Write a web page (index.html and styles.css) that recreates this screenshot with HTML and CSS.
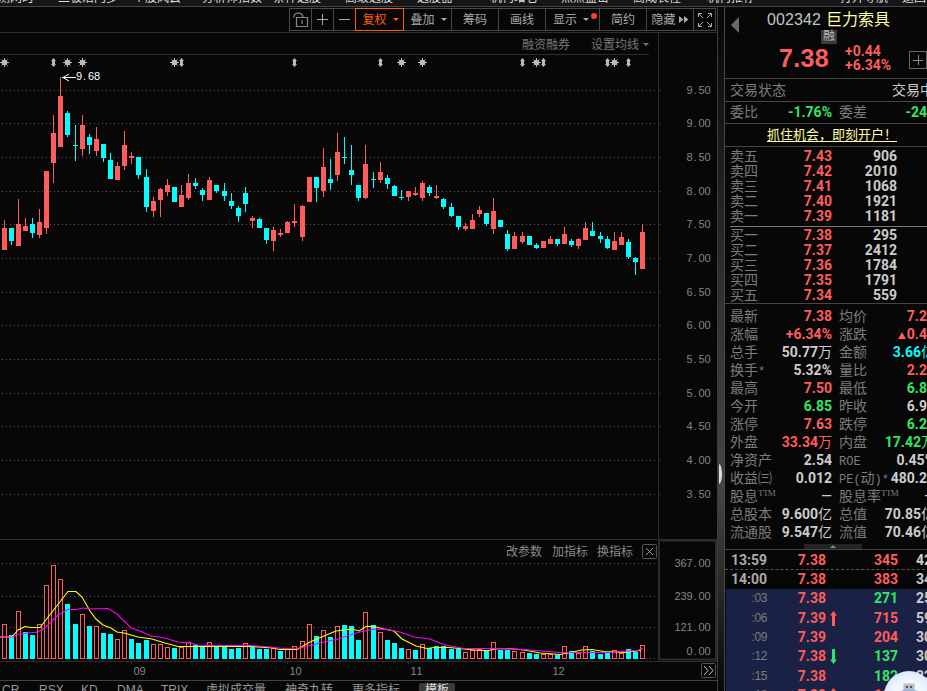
FILE: index.html
```html
<!DOCTYPE html>
<html lang="zh-CN">
<head>
<meta charset="utf-8">
<title>巨力索具 002342</title>
<link rel="stylesheet" href="styles.css">
</head>
<body>
<nav class="menu">
  <span class="m1">金测网时</span><span class="m2">二板活门多</span><span class="m3">个股风云</span><span class="m4">分析师指数</span><span class="m5">条件选股</span><span class="m6">高级选股</span><span class="m7">选股器</span><span class="m8">机构增仓</span><span class="m9">点点盈击</span><span class="m10">高成长性</span><span class="m11">机构推荐</span><span class="m12">打开导航</span><span class="m13">返回</span>
</nav>
<div class="app">
  <main class="main">
    <div class="toolbar">
      <div class="tools">
        <button class="t w22"><svg width="16" height="16" viewBox="0 0 16 16"><path d="M.7 5.500C.7 3 2.500 1 5.500 1S10 3 10 5.500" fill="none" stroke="#777" stroke-width="1.4"/><path d="M3.500 5.500H14.500V14.500H3.500ZM9 8V12" fill="none" stroke="#888" stroke-width="1.2"/></svg></button>
        <button class="t w22"><svg width="11" height="11"><path d="M0 5.5H11M5.500 0V11" stroke="#aaa"/></svg></button>
        <button class="t w22"><svg width="11" height="11"><path d="M0 5.500H11" stroke="#aaa"/></svg></button>
        <button class="t w48 on">复权<i class="dn"></i></button>
        <button class="t w48">叠加<i class="dn"></i></button>
        <button class="t w47">筹码</button>
        <button class="t w47">画线</button>
        <button class="t w54 dot">显示<i class="dn"></i></button>
        <button class="t w47">简约</button>
        <button class="t w47 hide">隐藏<svg width="10" height="7"><path d="M0 0L4.500 3.500L0 7ZM5 0L9.500 3.500L5 7Z" fill="#aaa"/></svg></button>
        <button class="t w23"><svg width="14" height="14"><path d="M.5 4V.5H4M.5.5L5 5M10 .5H13.500V4M13.500.5L9 5M.5 10V13.500H4M.5 13.500L5 9M10 13.500H13.500V10M13.500 13.500L9 9" fill="none" stroke="#aaa"/></svg></button>
      </div>
    </div>
    <div class="sub"><div class="sub-left"><span>融资融券</span><span>设置均线<i class="dn"></i></span></div></div>
    <svg id="kline" class="pane" width="717" height="485" viewBox="0 55 717 485"></svg>
    <svg id="volume" class="pane" width="717" height="140" viewBox="0 540 717 140"></svg>
    <div class="tabs">
      <span class="c1">CR</span><span class="c2">RSX</span><span class="c3">KD</span><span class="c4">DMA</span><span class="c5">TRIX</span><span class="c6">虚拟成交量</span><span class="c7">神奇九转</span><span class="c8">更多指标</span><span class="c9">模板</span>
    </div>
  </main>
  <div class="split"><i></i></div>
  <aside class="quote">
    <header class="head">
      <i class="prev"></i>
      <div class="name"><span>002342</span><b>巨力索具</b></div>
      <div class="tag">融</div>
      <div class="last"><strong>7.38</strong><div class="chg"><span>+0.44</span><span>+6.34%</span></div><em class="plus"></em></div>
    </header>
    <div class="state"><span>交易状态</span><span class="lt">交易中</span></div>
    <div class="row ratio"><span class="k">委比</span><b class="g">-1.76%</b><span class="k">委差</span><b class="g">-246</b></div>
    <div class="link"><a>抓住机会，即刻开户！</a></div>
    <div class="book asks">
      <div><span>卖五</span><b class="r">7.43</b><b>906</b></div>
      <div><span>卖四</span><b class="r">7.42</b><b>2010</b></div>
      <div><span>卖三</span><b class="r">7.41</b><b>1068</b></div>
      <div><span>卖二</span><b class="r">7.40</b><b>1921</b></div>
      <div><span>卖一</span><b class="r">7.39</b><b>1181</b></div>
    </div>
    <div class="book bids">
      <div><span>买一</span><b class="r">7.38</b><b>295</b></div>
      <div><span>买二</span><b class="r">7.37</b><b>2412</b></div>
      <div><span>买三</span><b class="r">7.36</b><b>1784</b></div>
      <div><span>买四</span><b class="r">7.35</b><b>1791</b></div>
      <div><span>买五</span><b class="r">7.34</b><b>559</b></div>
    </div>
    <div class="stats">
      <div class="row"><span class="k">最新</span><b class="r">7.38</b><span class="k">均价</span><b class="r">7.21</b></div>
      <div class="row"><span class="k">涨幅</span><b class="r">+6.34%</b><span class="k">涨跌</span><b class="r"><i class="up"></i>0.44</b></div>
      <div class="row"><span class="k">总手</span><b>50.77<u>万</u></b><span class="k">金额</span><b class="c">3.66<u>亿</u></b></div>
      <div class="row"><span class="k">换手<s>*</s></span><b>5.32%</b><span class="k">量比</span><b class="r">2.21</b></div>
      <div class="row"><span class="k">最高</span><b class="r">7.50</b><span class="k">最低</span><b class="g">6.85</b></div>
      <div class="row"><span class="k">今开</span><b class="g">6.85</b><span class="k">昨收</span><b>6.94</b></div>
      <div class="row"><span class="k">涨停</span><b class="r">7.63</b><span class="k">跌停</span><b class="g">6.25</b></div>
      <div class="row"><span class="k">外盘</span><b class="r">33.34<u>万</u></b><span class="k">内盘</span><b class="g">17.42<u>万</u></b></div>
      <div class="row"><span class="k">净资产</span><b>2.54</b><span class="k"><s>ROE</s></span><b>0.45%</b></div>
      <div class="row"><span class="k">收益㈢</span><b>0.012</b><span class="k"><s>PE(</s>动<s>)*</s></span><b>480.21</b></div>
      <div class="row"><span class="k">股息<sup>TTM</sup></span><b><u>—</u></b><span class="k">股息率<sup>TTM</sup></span><b><u>—</u></b></div>
      <div class="row"><span class="k">总股本</span><b>9.600<u>亿</u></b><span class="k">总值</span><b>70.85<u>亿</u></b></div>
      <div class="row"><span class="k">流通股</span><b>9.547<u>亿</u></b><span class="k">流值</span><b>70.46<u>亿</u></b></div>
      <div class="fold"><i></i></div>
    </div>
    <div class="ticks">
      <div class="dash"><b class="tm">13:59</b><b class="r">7.38</b><i></i><b class="r">345</b><b class="n">42</b></div>
      <div><b class="tm">14:00</b><b class="r">7.38</b><i></i><b class="r">383</b><b class="n">34</b></div>
      <div class="sel"><span>:03</span><b class="r">7.38</b><i></i><b class="g">271</b><b class="n">25</b></div>
      <div class="sel"><span>:06</span><b class="r">7.39</b><svg class="r" width="7" height="15"><path d="M3.500 0L7 4.500H5V15H2V4.500H0Z"/></svg><b class="r">715</b><b class="n">59</b></div>
      <div class="sel"><span>:09</span><b class="r">7.39</b><i></i><b class="r">204</b><b class="n">30</b></div>
      <div class="sel"><span>:12</span><b class="r">7.38</b><svg class="g" width="7" height="15"><path d="M3.500 15L7 10.500H5V0H2V10.500H0Z"/></svg><b class="g">137</b><b class="n">30</b></div>
      <div class="sel"><span>:15</span><b class="r">7.38</b><i></i><b class="g">182</b><b class="n">22</b></div>
      <div class="sel"><span>:18</span><b class="r">7.39</b><svg class="r" width="7" height="15"><path d="M3.500 0L7 4.500H5V15H2V4.500H0Z"/></svg><b class="r">116</b><b class="n">22</b></div>
    </div>
  </aside>
</div>
<div class="robot"><svg width="50" height="50" viewBox="0 0 50 50"><rect x="19.500" y="12.500" width="11" height="7" fill="#b9bcc2"/><path d="M22 15h2v2h-2zM26 15h2v2h-2z" fill="#555"/><rect x="17" y="19.500" width="17" height="12" rx="2" fill="#5b86ee"/></svg></div>
<script src="chart.js"></script>
</body>
</html>
```
FILE: styles.css
```css
* { box-sizing: border-box; }
html, body { height: 100%; }
body {
  margin: 0; width: 927px; height: 691px; overflow: hidden; position: relative;
  background: #070707; color: #ccc;
  font: 12px/14px "Liberation Sans", "Noto Sans CJK SC", sans-serif;
}
i, em { font-style: normal; }
u, s { text-decoration: none; }

/* menu strip, only the feet of its labels are in view */
.menu { height: 7px; background: #161616; border-bottom: 1px solid #454545; overflow: hidden; display: flex; align-items: flex-end; color: #ddd; white-space: nowrap; }
.menu span { flex: none; height: 14px; line-height: 14px; margin-bottom: 1px; }
.m1 { width: 58px; text-indent: -14px; } .m2 { width: 75px; } .m3 { width: 69px; } .m4 { width: 71px; }
.m5 { width: 72px; } .m6 { width: 72px; } .m7 { width: 73px; } .m8 { width: 71px; }
.m9 { width: 72px; } .m10 { width: 74px; } .m11 { width: 133px; } .m12 { width: 62px; }

.app { display: flex; height: 684px; }
.main { width: 717px; flex: none; display: flex; flex-direction: column; overflow: hidden; }
.pane { display: block; flex: none; }

.toolbar { height: 26px; flex: none; border-bottom: 1px solid #2c2c2c; padding: 1px 1px 0 0; display: flex; justify-content: flex-end; }
.tools { display: flex; height: 23px; width: 427px; border: 1px solid #484848; }
.t { background: none; color: #a8a8a8; border: 0; border-right: 1px solid #484848; padding: 0; font: inherit; display: flex; align-items: center; justify-content: center; flex: none; position: relative; }
.t:last-child { border-right: 0; }
.w22 { width: 22px; } .w23 { width: 21px; } .w47 { width: 47px; } .w48 { width: 48px; } .w54 { width: 54px; }
.t.on { color: #ff5f00; border: 1px solid #ff5f00; margin: -1px 0 -1px -1px; width: 49px; padding-left: 2px; }
.dn { border: 3px solid transparent; border-top-color: currentColor; border-bottom: 0; margin-left: 6px; }
.t.w48:not(.on) { padding-left: 2px; }
.dot::after { content: ""; position: absolute; right: 2px; top: 4px; width: 6px; height: 6px; border-radius: 50%; background: #ff3c3c; }
.dot .dn { margin-right: 3px; }
.hide svg { margin-left: 3px; }

.sub { height: 22px; flex: none; }
.sub-left { width: 659px; height: 22px; border-right: 1px solid #2c2c2c; padding: 1px 9px 0 0; display: flex; justify-content: flex-end; gap: 21px; align-items: center; color: #777;
  background: linear-gradient(#2c2c2c, #2c2c2c) 0 100% / 649px 1px no-repeat; }
.sub-left span { display: flex; align-items: center; }
.sub-left .dn { margin-left: 4px; }

.tabs { height: 11px; flex: none; border-top: 1px solid #444; display: flex; color: #999; white-space: nowrap; line-height: 14px; padding: 2px 0 0 2px; overflow: hidden; }
.tabs span { flex: none; height: 15px; }
.c1 { width: 37px; } .c2 { width: 42px; } .c3 { width: 36px; } .c4 { width: 44px; } .c5 { width: 45px; }
.c6 { width: 79px; } .c7 { width: 67px; } .c8 { width: 67px; }
.c9 { width: 36px; background: #3b3b3b; color: #ddd; text-align: center; border-radius: 2px 2px 0 0; }

.split { width: 8px; flex: none; border-left: 1px solid #3c3c3c; border-right: 1px solid #4a4a4a; background: linear-gradient(#070707, #333 45%, #444 70%, #222 88%, #080808); display: flex; flex-direction: column; }
.split i { margin: 457px 0 0 1px; width: 3px; height: 20px; background: #ddd; border-radius: 0 3px 3px 0 / 0 10px 10px 0; }

.quote { width: 215px; flex: none; }
.quote b, .chg { font-family: Roboto, "Noto Sans CJK SC", sans-serif; font-size: 14px; font-weight: bold; }
.r { color: #ff5c5c; fill: #ff5c5c; } .g { color: #32e664; fill: #32e664; } .c { color: #00ffff; }
.head { height: 72px; border-bottom: 1px solid #454545; position: relative; padding: 3px 0 0; }
.prev { position: absolute; left: 6px; top: 10px; border: 8px solid transparent; border-right-color: #6a6a6a; border-left: 0; }
.name { padding-left: 42px; font-size: 16px; line-height: 19px; height: 19px; color: #bcc4cc; white-space: nowrap; letter-spacing: .1px; }
.name .quote b, .name b { font-weight: normal !important; font-size: 16px !important; color: #ffffa0; margin-left: 5px; letter-spacing: 0; }
.tag { margin: 1px 0 0 96px; width: 16px; height: 14px; line-height: 13px; background: #3a3a3a; color: #bbb; text-align: center; }
.last { display: flex; height: 34px; padding-left: 54px; }
.last strong { font-size: 25px; line-height: 29px; color: #ff5c5c; width: 66px; letter-spacing: .3px; }
.chg { color: #ff5c5c; display: flex; flex-direction: column; line-height: 14px; width: 64px; }
.plus { width: 18px; height: 18px; margin-top: 7px; border: 1px solid #666; background: linear-gradient(#888, #888) center / 10px 1px no-repeat, linear-gradient(#888, #888) center / 1px 10px no-repeat; }
.state { height: 23px; border-bottom: 1px solid #454545; padding: 0 0 0 5px; display: flex; justify-content: space-between; align-items: center; font-size: 14px; color: #7c7c7c; }
.state .lt { color: #ccc; width: 48px; white-space: nowrap; }
.row { display: grid; grid-template-columns: 42px 60px 50px 53px; height: 18px; line-height: 18px; padding-left: 5px; width: 210px; white-space: nowrap; }
.row b { justify-self: end; }
.row .k { font-size: 14px; color: #7c7c7c; }
.row .k:nth-child(3) { padding-left: 7px; }
.row u { font-weight: normal; font-size: 14px; }
.row s { font-family: "Liberation Mono", monospace; font-size: 12px; }
.row sup { font: 9px/9px "Liberation Serif", serif; letter-spacing: -.6px; vertical-align: 5px; }
.ratio { height: 22px; line-height: 21px; border-bottom: 1px solid #454545; width: 215px; }
.link { height: 23px; border-bottom: 1px solid #454545; padding: 4px 0 0 42px; font-size: 13px; color: #ffffa0; }
.link a { text-decoration: underline; text-underline-offset: 2px; white-space: nowrap; }
.book div { display: grid; grid-template-columns: 42px 60px 65px; height: 15px; line-height: 15px; padding-left: 5px; }
.book span { font-size: 14px; color: #7c7c7c; }
.book b { text-align: right; }
.asks { height: 80px; padding-top: 2px; }
.asks::after { content: ""; display: block; height: 1px; margin: 2px 0 0 5px; background: #7a7a7a; }
.bids { height: 77px; padding-top: 1px; border-bottom: 1px solid #454545; }
.stats { height: 246px; padding-top: 3px; border-bottom: 1px solid #454545; }
.up { display: inline-block; border: 4px solid transparent; border-bottom: 7px solid #ff5c5c; border-top: 0; margin-right: 1px; }
.fold { width: 58px; height: 5px; margin: 3px 0 0 79px; background: #242424; display: flex; justify-content: center; align-items: center; }
.fold i { border: 3px solid transparent; border-bottom-color: #888; border-top: 0; }
.ticks div { display: grid; grid-template-columns: 37px 59px 11px 61px 30px; align-items: center; height: 19.3px; line-height: 19px; padding-left: 5px; }
.ticks div > * { text-align: right; }
.ticks svg { justify-self: end; }
.ticks .tm { color: #aaa; }
.ticks span { color: #7c7c7c; font: 12px/19px "Liberation Sans", sans-serif; letter-spacing: -.4px; }
.ticks .n { text-align: left; padding-left: 18px; }
.ticks .dash { height: 20px; padding-top: 1px; border-bottom: 1px dashed #555; }
.ticks .sel { background: #192244; margin-left: 1px; padding-left: 4px; }

.robot { position: absolute; left: 884px; top: 671px; width: 50px; height: 50px; border-radius: 50%; background: radial-gradient(circle, #f3f7ff 40%, #ccd9f8); }

.grid { stroke: #5a5a5a; stroke-dasharray: 1 3; }
.edge { stroke: #2c2c2c; fill: none; }
.lbl { font: 11px "Liberation Sans", sans-serif; fill: #858585; }
.act { font: 12px "Noto Sans CJK SC", sans-serif; fill: #8a8a8a; }
.peak { fill: #fff; }
```
FILE: chart.js
```js
// x, candle colour, high, body top, body bottom, low, volume colour, volume top
const D = `2 r 220 228 250 250 r 624
9 c 228 228 241 245 c 635
16 r 199 224 246 246 r 611
23 r 218 226 231 231 c 632
30 c 218 224 233 238 c 635
37 r 209 222 235 238 r 624
44 r 171 171 228 234 r 585
51 r 115 133 163 183 r 565
58 r 77 96 147 147 r 579
65 c 111 113 135 137 c 604
73 c 125 145 146 161 c 624
80 r 115 125 149 156 r 614
87 c 134 137 145 154 c 626
94 r 127 139 151 156 r 626
101 c 144 144 158 162 c 633
108 c 153 160 179 179 c 634
115 r 162 166 180 180 r 639
122 r 131 145 166 170 r 630
129 r 152 156 158 164 c 639
136 c 157 157 175 179 c 643
144 c 169 177 207 212 c 640
151 r 197 201 211 217 r 644
158 r 188 189 200 217 r 644
165 r 179 185 192 196 r 647
172 c 187 187 202 202 c 648
179 r 185 195 207 207 r 647
186 r 174 183 198 200 r 642
193 c 178 183 186 189 c 645
200 c 188 190 195 201 c 646
207 r 177 180 200 200 r 642
214 c 185 185 191 193 c 647
222 c 183 191 196 201 c 646
229 c 193 201 206 209 c 649
236 c 206 208 216 222 c 648
243 c 187 193 204 212 r 643
250 r 216 218 221 228 c 646
257 c 218 219 228 228 c 649
264 c 228 228 240 244 c 649
271 r 227 230 241 251 r 648
278 r 229 233 235 237 c 651
285 r 221 222 233 233 r 649
292 r 204 221 223 227 r 646
300 r 205 206 237 241 r 641
307 r 177 177 202 202 r 624
314 c 177 177 188 202 c 636
321 r 148 167 191 197 r 630
328 c 159 179 183 190 c 637
335 r 133 152 175 181 r 626
342 c 137 157 158 164 c 625
349 c 145 170 175 185 c 626
356 c 185 185 198 201 c 640
363 r 145 164 198 199 r 612
371 c 172 179 180 188 c 625
378 r 162 172 180 183 r 632
385 c 175 178 184 189 c 640
392 c 185 186 196 196 c 643
399 c 190 197 198 200 c 648
406 r 191 191 197 201 r 649
413 r 187 193 195 196 c 650
420 r 181 183 198 201 r 644
427 c 185 187 193 196 c 648
434 r 185 196 198 199 c 646
441 c 198 199 207 209 c 646
449 c 203 207 216 217 c 649
456 c 216 216 227 230 c 649
463 r 223 226 229 231 r 652
470 r 214 220 229 229 r 650
477 r 206 210 214 217 r 649
484 c 213 213 224 226 c 651
491 r 198 211 229 234 r 642
498 c 220 220 227 227 c 650
505 c 230 234 249 251 c 650
512 r 232 236 249 249 r 651
520 r 232 236 242 244 r 652
527 c 236 236 245 245 c 653
534 c 243 245 248 249 c 654
541 r 241 241 248 248 r 654
548 r 236 239 244 244 r 654
555 c 239 239 244 246 c 655
562 r 227 234 244 244 r 646
569 c 239 241 245 247 c 651
576 r 238 239 246 249 r 653
583 r 222 228 240 240 r 646
590 c 222 231 236 236 c 651
598 c 232 236 239 243 c 654
605 c 236 239 248 249 c 653
612 r 232 241 250 250 r 650
619 r 232 237 245 245 r 653
626 c 239 242 257 259 c 649
633 c 257 258 262 275 c 652
640 r 224 232 269 269 r 645`.split('\n').map(l => l.split(' '));
const COL = { r: '#ff5c5c', c: '#00ffff' };
const rect = (x, y, w, h, f) => `<rect x="${x}" y="${y}" width="${w}" height="${h}" fill="${f}"/>`;
const grid = y => `<path class="grid" d="M2 ${y}.5H657"/><path class="edge" d="M658 ${y}.5H661"/>`;
// digits sit on a fixed 6px advance
const num = (s, x, y, cls = '') =>
  `<text class="lbl ${cls}" y="${y}" x="${[...s].map((c, i) => x + i * 6 + (c === '.' ? 1 : 0)).join(' ')}">${s}</text>`;

let k = '<path class="edge" d="M658.5 55V540M0 539.5H717"/>';
[90, 123, 157, 191, 224, 258, 292, 325, 359, 393, 426, 460, 494].forEach((y, i) => {
  k += grid(y) + num((9.5 - i * 0.5).toFixed(2), 686.5, y + 4);
});
for (const [x, c, h, t, b, l] of D) {
  k += rect(+x + 2, h, 1, l - h, COL[c]) + rect(x, t, 5, b - t, COL[c]);
}
for (const x of [4, 67, 82, 174, 401, 422, 536, 614])
  k += `<path d="M${x - 4} 62.5h9M${x + 0.5} 58v9M${x - 2.5} 59.500l6 6M${x + 3.5} 59.500l-6 6" stroke="#bbb"/><circle cx="${x + 0.5}" cy="62.5" r="2.8" fill="#bbb"/>`;
for (const x of [53, 181, 294, 380, 522, 543, 607, 628])
  k += `<path d="M${x + 0.5} 58l2.500 3h-1v3h1l-2.500 3l-2.500-3h1v-3h-1z" fill="#bbb"/>`;
k += '<path d="M62 77.500H76M69 74L63 77.500L69 81" fill="none" stroke="#fff"/>' + num('9.68', 76, 80, 'peak');
document.getElementById('kline').innerHTML = k;

let v = '<path class="edge" d="M0 661.5H717M131.500 661v3M287.500 661v3M408.500 661v3M550.500 661v3"/><rect class="edge" x="659" y="540.5" width="57" height="119" stroke-width="2"/>';
for (const y of [563, 596, 627, 658]) v += grid(y);
[['367.00', 567], ['239.00', 600], ['121.00', 631], ['0.00', 655]].forEach(([s, y]) => {
  v += num(s, 710.5 - s.length * 6, y);
});
for (const d of D) {
  const x = +d[0], t = +d[7];
  v += d[6] === 'c' ? rect(x, t, 5, 659 - t, COL.c)
    : `<rect x="${x + 0.5}" y="${t + 0.5}" width="4" height="${658 - t}" fill="#070707" stroke="${COL.r}"/>`;
}
const line = (p, c) => `<polyline points="${p}" fill="none" stroke="${c}" stroke-width="1.1"/>`;
v += line('0,637 12,637 18,630 25,626.5 31,627.500 40,627.500 68,591.500 76,591.500 82,597 90,611 96,619 103,625 111,628 117,632 124,633 138,637 152,639 165,643 178,646.500 243,646.500 253,646.500 273,648 280,649.500 297,649.500 310,642 324,636 336,631 352,629 359,631 366,626.500 374,626.500 384,629 394,631 402,639 416,646 427,648.500 434,647.500 449,647.500 464,649 480,650.500 489,650.500 495,649 508,648.500 524,650 540,653 560,654.500 568,653 582,650 592,649.500 604,651.500 625,652.500 640,650.500 642,648', '#ffff00');
v += line('0,637 12,637 20,634 38,632 46,627 58,615 68,609.500 76,609.500 83,608 90,609 108,608.500 117,614 131,628 140,631 151,636 165,638 178,642 190,643 200,645.500 250,645.500 270,647 283,648.500 300,648 320,643 338,639 350,635 360,632 372,629.500 384,629 400,632 414,637 430,639 445,645 464,648.500 500,648.500 524,649.500 542,651 560,652.500 610,652.500 620,651.500 638,650.500 642,648', '#ff00ff');
[['改参数', 506], ['加指标', 552], ['换指标', 597]].forEach(([s, x]) => { v += `<text class="act" x="${x}" y="556">${s}</text>`; });
v += '<rect x="642.5" y="544.5" width="14" height="14" rx="1" fill="none" stroke="#555"/><path d="M646 548l7 7M653 548l-7 7" stroke="#999"/>';
[['09', 133.500], ['10', 289.500], ['11', 410.500], ['12', 552.500]].forEach(([s, x]) => { v += num(s, x, 675); });
v += '<rect x="701.5" y="663.5" width="14" height="14" rx="1" fill="none" stroke="#555"/><path d="M704 666l4 4.500l-4 4.500M709 666l4 4.500l-4 4.500" fill="none" stroke="#ccc"/>';
document.getElementById('volume').innerHTML = v;
```
